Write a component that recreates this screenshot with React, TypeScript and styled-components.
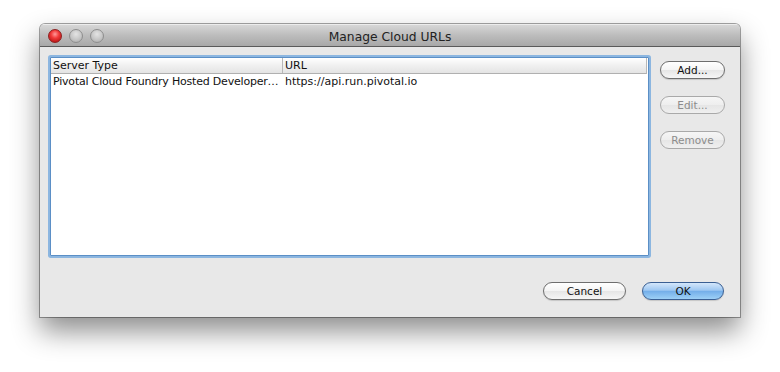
import React from "react";
import styled, { createGlobalStyle, css } from "styled-components";

const Global = createGlobalStyle`
  html, body { margin: 0; padding: 0; background: #ffffff; }
  body { font-family: "DejaVu Sans", "Liberation Sans", sans-serif; }
  * { box-sizing: border-box; }
`;

const Stage = styled.div`
  padding: 24px 0 0 40px;
  width: 780px;
  height: 372px;
`;

const Window = styled.div`
  width: 700px;
  height: 293px;
  background: #e8e8e8;
  border-radius: 5px 5px 0 0;
  box-shadow: 0 14px 28px rgba(0, 0, 0, 0.45), 0 0 0 1px rgba(0, 0, 0, 0.35);
  display: flex;
  flex-direction: column;
  overflow: hidden;
`;

const TitleBar = styled.div`
  height: 23px;
  flex: none;
  display: grid;
  grid-template-columns: 1fr auto 1fr;
  align-items: center;
  padding: 0 8px;
  background: linear-gradient(#d9d9d9, #bdbdbd 50%, #a8a8a8);
  border-bottom: 1px solid #5a5a5a;
  box-shadow: inset 0 1px 0 #ececec;
`;

const Lights = styled.div`
  display: flex;
  gap: 7px;
  padding-top: 1px;
`;

const Light = styled.span<{ $red?: boolean }>`
  width: 14px;
  height: 14px;
  border-radius: 50%;
  ${(p) =>
    p.$red
      ? css`
          background: radial-gradient(circle at 50% 35%, #ff9a9a 0%, #f13a3a 40%, #b81414 85%);
          border: 1px solid #8c2020;
        `
      : css`
          background: radial-gradient(circle at 50% 35%, #e4e4e4 0%, #c6c6c6 55%, #a9a9a9 95%);
          border: 1px solid #8e8e8e;
        `}
`;

const Title = styled.div`
  font-size: 12.3px;
  color: #222;
  text-align: center;
  padding-top: 3px;
`;

const Body = styled.div`
  flex: 1;
  display: flex;
  flex-direction: column;
  padding: 10px 15px 0 10px;
`;

const Top = styled.div`
  display: flex;
  gap: 11px;
`;

const TableFrame = styled.div`
  width: 599px;
  height: 199px;
  background: #fff;
  border: 1px solid #5b8fc6;
  box-shadow: 0 0 0 2px #8cb6e0;
  border-radius: 1px;
  display: flex;
  flex-direction: column;
  overflow: hidden;
`;

const Row = styled.div<{ $header?: boolean }>`
  display: grid;
  grid-template-columns: 232px 1fr;
  height: 16px;
  align-items: center;
  font-size: 11px;
  color: #111;
  ${(p) =>
    p.$header &&
    css`
      background: linear-gradient(#ffffff, #f0f0f0 50%, #e4e4e4);
      border-bottom: 1px solid #b0b0b0;
      margin-right: 1px;
      border-right: 1px solid #b8b8b8;
    `}
`;

const Cell = styled.div<{ $header?: boolean; $first?: boolean }>`
  padding: 0 2px;
  white-space: nowrap;
  overflow: hidden;
  height: 100%;
  line-height: 16px;
  ${(p) =>
    p.$header &&
    p.$first &&
    css`
      border-right: 1px solid #b8b8b8;
    `}
  ${(p) =>
    !p.$header &&
    p.$first &&
    css`
      letter-spacing: -0.2px;
    `}
`;

const SideButtons = styled.div`
  display: flex;
  flex-direction: column;
  gap: 17px;
  padding-top: 4px;
`;

const Button = styled.button<{ $primary?: boolean; $w: number }>`
  width: ${(p) => p.$w}px;
  height: 18px;
  border-radius: 9px;
  font-family: "DejaVu Sans", "Liberation Sans", sans-serif;
  font-size: 10.5px;
  line-height: 16px;
  padding: 0;
  color: #111;
  border: 1px solid #6e6e6e;
  background: linear-gradient(#ffffff, #f4f4f4 50%, #e6e6e6 52%, #f6f6f6);
  box-shadow: 0 1px 1px rgba(0, 0, 0, 0.15);
  &:disabled {
    color: #8c8c8c;
    border-color: #a9a9a9;
    background: linear-gradient(#f6f6f6, #eeeeee 50%, #e6e6e6 52%, #efefef);
    box-shadow: none;
  }
  ${(p) =>
    p.$primary &&
    css`
      border-color: #3a5f93;
      background: linear-gradient(#d4e7fb, #9fc8f2 45%, #74aee9 52%, #9dd0f6);
    `}
`;

const Footer = styled.div`
  display: flex;
  justify-content: flex-end;
  gap: 16px;
  margin-top: 26px;
  padding-right: 1px;
`;

export default function App() {
  return (
    <>
      <Global />
      <Stage>
        <Window>
          <TitleBar>
            <Lights>
              <Light $red />
              <Light />
              <Light />
            </Lights>
            <Title>Manage Cloud URLs</Title>
            <div />
          </TitleBar>
          <Body>
            <Top>
              <TableFrame>
                <Row $header>
                  <Cell $header $first>Server Type</Cell>
                  <Cell $header>URL</Cell>
                </Row>
                <Row>
                  <Cell $first>Pivotal Cloud Foundry Hosted Developer…</Cell>
                  <Cell>https://api.run.pivotal.io</Cell>
                </Row>
              </TableFrame>
              <SideButtons>
                <Button $w={65}>Add...</Button>
                <Button $w={65} disabled>Edit...</Button>
                <Button $w={65} disabled>Remove</Button>
              </SideButtons>
            </Top>
            <Footer>
              <Button $w={83}>Cancel</Button>
              <Button $w={82} $primary>OK</Button>
            </Footer>
          </Body>
        </Window>
      </Stage>
    </>
  );
}
